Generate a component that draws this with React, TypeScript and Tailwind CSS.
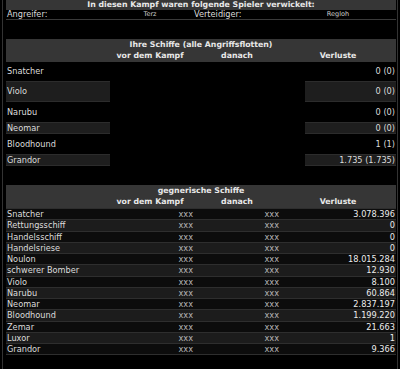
const OWN = [
  { name: "Snatcher", loss: "0 (0)", h: "h-[19px]", box: false },
  { name: "Violo", loss: "0 (0)", h: "h-[21px]", box: true },
  { name: "Narubu", loss: "0 (0)", h: "h-[20px]", box: false },
  { name: "Neomar", loss: "0 (0)", h: "h-[12px]", box: true },
  { name: "Bloodhound", loss: "1 (1)", h: "h-[20px]", box: false },
  { name: "Grandor", loss: "1.735 (1.735)", h: "h-[12px]", box: true },
];

const ENEMY: [string, string][] = [
  ["Snatcher", "3.078.396"],
  ["Rettungsschiff", "0"],
  ["Handelsschiff", "0"],
  ["Handelsriese", "0"],
  ["Noulon", "18.015.284"],
  ["schwerer Bomber", "12.930"],
  ["Violo", "8.100"],
  ["Narubu", "60.864"],
  ["Neomar", "2.837.197"],
  ["Bloodhound", "1.199.220"],
  ["Zemar", "21.663"],
  ["Luxor", "1"],
  ["Grandor", "9.366"],
];

const COLS = "grid grid-cols-[100px_88px_86px_1fr]";

function SectionHead({ title }: { title: string }) {
  return (
    <div className="bg-[#363636] font-bold text-[7.8px] text-[#e8e8e8]">
      <div className="h-[11.5px] flex items-center justify-center">{title}</div>
      <div className={`${COLS} h-[11.5px] items-center`}>
        <span />
        <span className="text-center">vor dem Kampf</span>
        <span className="text-center">danach</span>
        <span className="text-center">Verluste</span>
      </div>
    </div>
  );
}

export default function App() {
  return (
    <div className="w-[400px] h-[369px] bg-black px-[2px] overflow-hidden font-['DejaVu_Sans',sans-serif] text-[8.2px] leading-none text-[#dcdcdc]">
      <div className="h-full border-x border-[#333] pl-[3px] pr-[1px]">
        {/* Beteiligte Spieler */}
        <div className="h-[10px] bg-[#363636] flex items-center justify-center font-bold text-[7.8px] text-[#e8e8e8]">
          In diesen Kampf waren folgende Spieler verwickelt:
        </div>
        <div className={`${COLS} h-[10px] items-center border-b border-[#3a3a3a]`}>
          <span className="pl-[1px]">Angreifer:</span>
          <span className="text-center text-[6.5px] text-[#cfcfcf]">Terz</span>
          <span>Verteidiger:</span>
          <span className="text-center text-[6.5px] text-[#cfcfcf]">Regloh</span>
        </div>

        {/* Eigene Schiffe */}
        <div className="mt-[19px]">
          <SectionHead title="Ihre Schiffe (alle Angriffsflotten)" />
          {OWN.map((r) => (
            <div key={r.name} className={`flex justify-between ${r.h}`}>
              <div className={`w-[104px] flex items-center pl-[1px] ${r.box ? "bg-[#1e1e1e] border-y border-[#2c2c2c]" : ""}`}>
                {r.name}
              </div>
              <div className={`w-[91px] flex items-center justify-end pr-[1px] ${r.box ? "bg-[#1e1e1e] border-y border-[#2c2c2c]" : ""}`}>
                {r.loss}
              </div>
            </div>
          ))}
        </div>

        {/* Gegnerische Schiffe */}
        <div className="mt-[19px]">
          <SectionHead title="gegnerische Schiffe" />
          <div className="border-b border-[#2e2e2e]">
            {ENEMY.map(([name, loss], i) => (
              <div
                key={name}
                className={`${COLS} h-[11.25px] items-center border-t border-[#2e2e2e] ${i % 2 ? "bg-[#1c1c1c]" : "bg-[#0c0c0c]"}`}
              >
                <span className="pl-[1px]">{name}</span>
                <span className="text-right pr-[1px] text-[#b5b5b5]">xxx</span>
                <span className="text-right pr-[1px] text-[#b5b5b5]">xxx</span>
                <span className="text-right pr-[1px] text-[#ececec]">{loss}</span>
              </div>
            ))}
          </div>
        </div>
      </div>
    </div>
  );
}
